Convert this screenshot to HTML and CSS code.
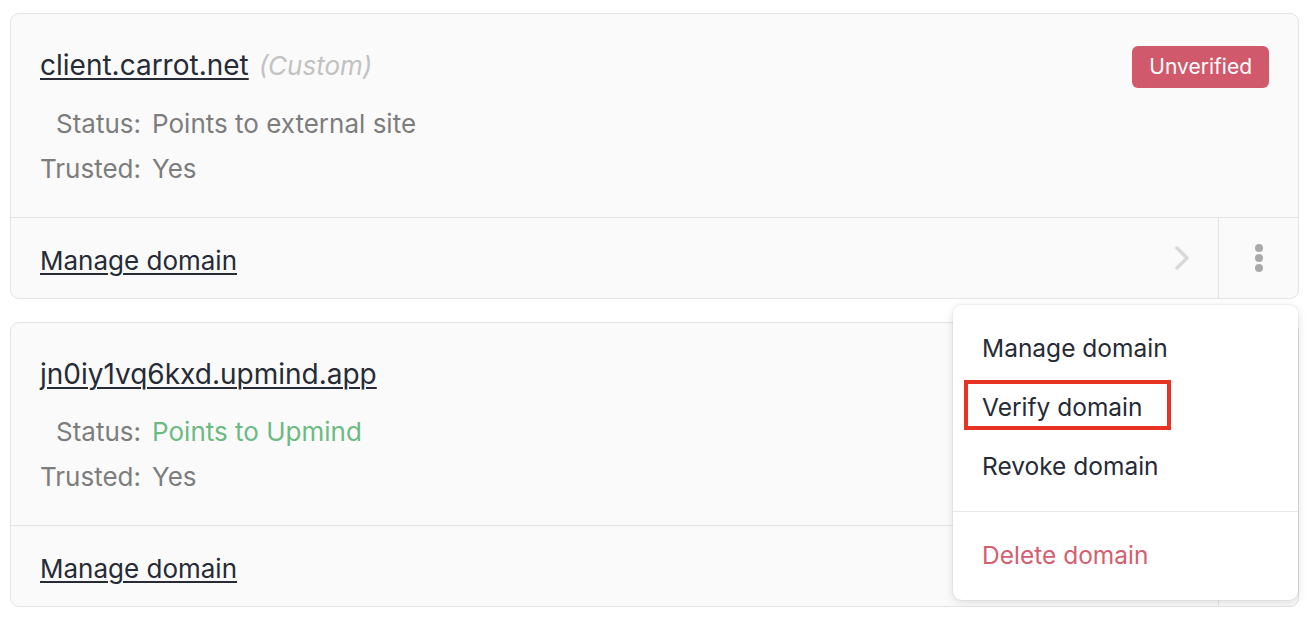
FILE: index.html
```html
<!DOCTYPE html>
<html lang="en">
<head>
  <meta charset="UTF-8">
  <meta name="viewport" content="width=device-width, initial-scale=1.0">
  <title>Domains</title>
  <link rel="stylesheet" href="styles.css">
</head>
<body>
  <div class="domain-list">
    <div class="domain-card">
      <div class="domain-body">
        <div class="domain-head">
          <h2 class="domain-name"><a href="#">client.carrot.net</a> <span class="domain-type">(Custom)</span></h2>
          <span class="badge badge-danger">Unverified</span>
        </div>
        <dl class="domain-info">
          <dt>Status:</dt>
          <dd>Points to external site</dd>
          <dt>Trusted:</dt>
          <dd>Yes</dd>
        </dl>
      </div>
      <div class="domain-foot">
        <a class="manage-link" href="#">
          <span>Manage domain</span>
          <svg class="chevron" width="16" height="26" viewBox="0 0 16 26"><path d="M3 3l10 10-10 10" fill="none" stroke="currentColor" stroke-width="3.5" stroke-linecap="round" stroke-linejoin="round"/></svg>
        </a>
        <div class="more">
          <button class="more-btn" type="button" aria-label="More actions">
            <span></span><span></span><span></span>
          </button>
          <ul class="menu">
            <li><a href="#">Manage domain</a></li>
            <li><a href="#">Verify domain</a></li>
            <li><a href="#">Revoke domain</a></li>
            <li class="menu-sep"></li>
            <li><a class="danger" href="#">Delete domain</a></li>
          </ul>
        </div>
      </div>
    </div>

    <div class="domain-card">
      <div class="domain-body">
        <div class="domain-head">
          <h2 class="domain-name"><a href="#">jn0iy1vq6kxd.upmind.app</a></h2>
        </div>
        <dl class="domain-info">
          <dt>Status:</dt>
          <dd class="ok">Points to Upmind</dd>
          <dt>Trusted:</dt>
          <dd>Yes</dd>
        </dl>
      </div>
      <div class="domain-foot">
        <a class="manage-link" href="#">
          <span>Manage domain</span>
          <svg class="chevron" width="16" height="26" viewBox="0 0 16 26"><path d="M3 3l10 10-10 10" fill="none" stroke="currentColor" stroke-width="3.5" stroke-linecap="round" stroke-linejoin="round"/></svg>
        </a>
        <div class="more">
          <button class="more-btn" type="button" aria-label="More actions">
            <span></span><span></span><span></span>
          </button>
        </div>
      </div>
    </div>
  </div>

  <div class="highlight"></div>
</body>
</html>
```

FILE: styles.css
```css
body {
  margin: 0;
  background: #fff;
  font-family: Inter, "Noto Sans", Arial, sans-serif;
  font-size: 26px;
  color: #262b36;
}
a {
  color: inherit;
}
.domain-list {
  display: flex;
  flex-direction: column;
  gap: 23px;
  width: 1289px;
  padding: 13px 0 0 10px;
}
.domain-card {
  border: 1px solid #e4e4e4;
  border-radius: 9px;
  background: #fafafa;
}
.domain-body {
  padding: 29px 29px 26px;
}
.domain-head {
  display: flex;
  justify-content: space-between;
  align-items: flex-start;
  min-height: 44px;
}
.domain-name {
  margin: 0;
  font-size: 28px;
  font-weight: 400;
  line-height: 44px;
}
.domain-name a {
  text-decoration-thickness: 2px;
  text-underline-offset: 3px;
}
.domain-type {
  margin-left: 2px;
  color: #c2c2c2;
  font-size: 26px;
  font-style: italic;
}
.badge {
  margin: 3px 0 0;
  padding: 0 17px;
  border-radius: 6px;
  font-size: 21px;
  line-height: 42px;
}
.badge-danger {
  background: #d05a6b;
  color: #fff;
}
.domain-info {
  display: grid;
  grid-template-columns: max-content 1fr;
  column-gap: 11px;
  margin: 13px 0 0;
  color: #7d7d7d;
  line-height: 45px;
}
.domain-info dt {
  text-align: right;
}
.domain-info dd {
  margin: 0;
}
.domain-info .ok {
  color: #6bbb83;
}
.domain-foot {
  display: flex;
  height: 80px;
  border-top: 1px solid #e4e4e4;
}
.manage-link {
  display: flex;
  flex: 1;
  align-items: center;
  justify-content: space-between;
  padding: 4px 28px 0 29px;
  border-right: 1px solid #e4e4e4;
  text-decoration: none;
}
.manage-link span {
  text-decoration: underline;
  text-decoration-thickness: 2px;
  text-underline-offset: 3px;
}
.chevron {
  margin-top: -4px;
  color: #d9d9d9;
}
.more {
  position: relative;
  width: 79px;
}
.more-btn {
  display: flex;
  flex-direction: column;
  align-items: center;
  justify-content: center;
  gap: 2px;
  width: 100%;
  height: 100%;
  border: 0;
  background: none;
  cursor: pointer;
}
.more-btn span {
  width: 8px;
  height: 8px;
  border-radius: 50%;
  background: #a9a9a9;
}
.menu {
  position: absolute;
  top: 87px;
  right: 0;
  z-index: 2;
  width: 345px;
  margin: 0;
  padding: 14px 0 15px;
  list-style: none;
  font-size: 24.5px;
  background: #fff;
  border-radius: 9px;
  box-shadow: 0 2px 10px rgba(0, 0, 0, 0.13), 0 0 0 1px rgba(0, 0, 0, 0.03);
}
.menu a {
  display: block;
  padding: 0 29px;
  line-height: 59px;
  text-decoration: none;
  color: #262b36;
}
.menu .danger {
  color: #d4606f;
}
.menu-sep {
  height: 1px;
  margin: 15px 0 14px;
  background: #e8e8e8;
}
.highlight {
  position: absolute;
  top: 380px;
  left: 964px;
  z-index: 3;
  width: 199px;
  height: 42px;
  border: 4px solid #e63323;
}
```
